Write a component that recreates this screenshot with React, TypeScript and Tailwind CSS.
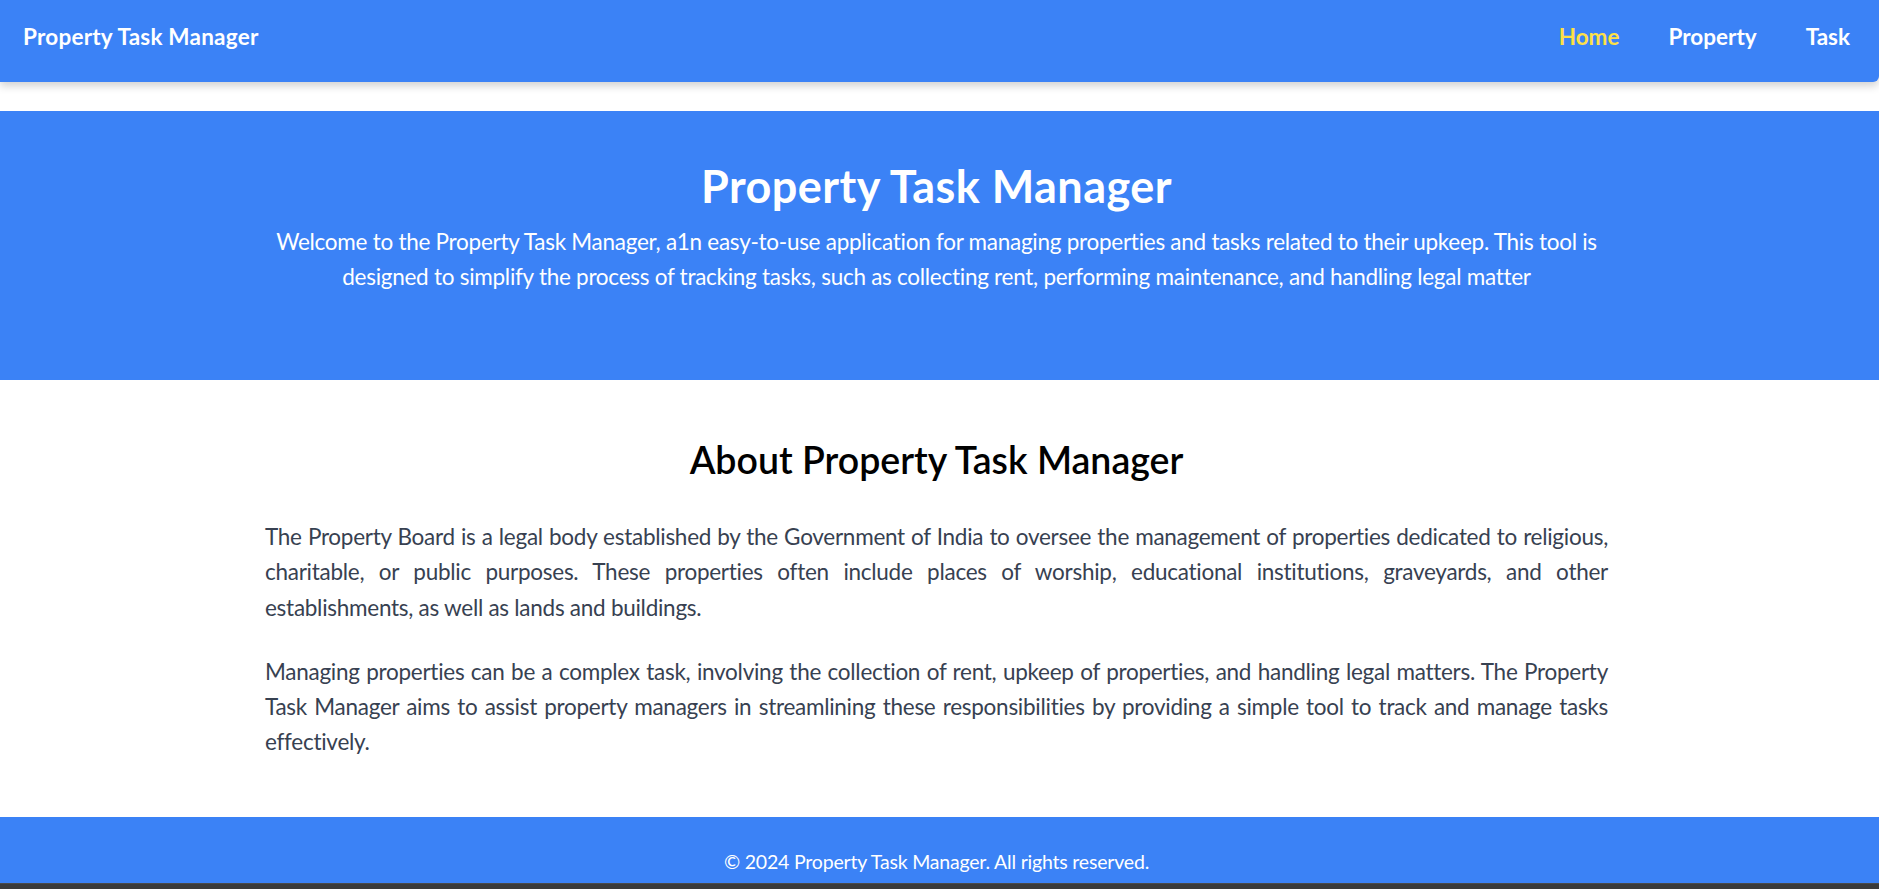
import React from "react";

const App = () => {
  return (
    <div className="min-h-screen flex flex-col bg-white font-['Lato','Open_Sans',sans-serif]">
      {/* Navbar */}
      <header className="h-[82px] bg-[#3b82f6] rounded-br-[6px] shadow-[0_4px_8px_rgba(0,0,0,0.18)] px-[23px] pt-[19px] flex justify-between items-start">
        <h1 className="text-[22.5px] leading-[35px] font-bold tracking-[0.01em] text-white">Property Task Manager</h1>
        <nav className="flex gap-[49px] pr-[6px]">
          <a href="#" className="text-[22.5px] leading-[35px] font-bold text-[#fde047]">Home</a>
          <a href="#" className="text-[22.5px] leading-[35px] font-bold text-white">Property</a>
          <a href="#" className="text-[22.5px] leading-[35px] font-bold text-white">Task</a>
        </nav>
      </header>

      {/* Hero */}
      <section className="mt-[29px] h-[269px] bg-[#3b82f6] pt-[50px] pr-[6px] text-center text-white">
        <div className="max-w-[1343px] mx-auto">
          <h2 className="text-[45px] leading-[50px] font-bold tracking-[0.01em]">Property Task Manager</h2>
          <p className="mt-[13px] text-[22.5px] leading-[35px] tracking-[-0.012em]">
            Welcome to the Property Task Manager, a1n easy-to-use application for managing properties and tasks related to their upkeep. This tool is designed to simplify the process of tracking tasks, such as collecting rent, performing maintenance, and handling legal matter
          </p>
        </div>
      </section>

      {/* About */}
      <section className="pt-[57px] pb-[57px] pr-[6px]">
        <div className="max-w-[1343px] mx-auto">
          <h2 className="text-[37.5px] leading-[45px] font-semibold text-black text-center">About Property Task Manager</h2>
          <p className="mt-[37px] text-[22.5px] leading-[35.3px] tracking-[-0.012em] text-[#374151] text-justify">
            The Property Board is a legal body established by the Government of India to oversee the management of properties dedicated to religious, charitable, or public purposes. These properties often include places of worship, educational institutions, graveyards, and other establishments, as well as lands and buildings.
          </p>
          <p className="mt-[29px] text-[22.5px] leading-[35.3px] tracking-[-0.012em] text-[#374151] text-justify">
            Managing properties can be a complex task, involving the collection of rent, upkeep of properties, and handling legal matters. The Property Task Manager aims to assist property managers in streamlining these responsibilities by providing a simple tool to track and manage tasks effectively.
          </p>
        </div>
      </section>

      {/* Footer */}
      <footer className="h-[66px] bg-[#3b82f6] pt-[31px] pr-[6px] text-center">
        <p className="text-[19.5px] leading-[27px] tracking-[-0.01em] text-white">&copy; 2024 Property Task Manager. All rights reserved.</p>
      </footer>
      <div className="h-[7px] bg-[#3a3a3a] border-t border-[#4a4a4a]"></div>
    </div>
  );
};

export default App;
